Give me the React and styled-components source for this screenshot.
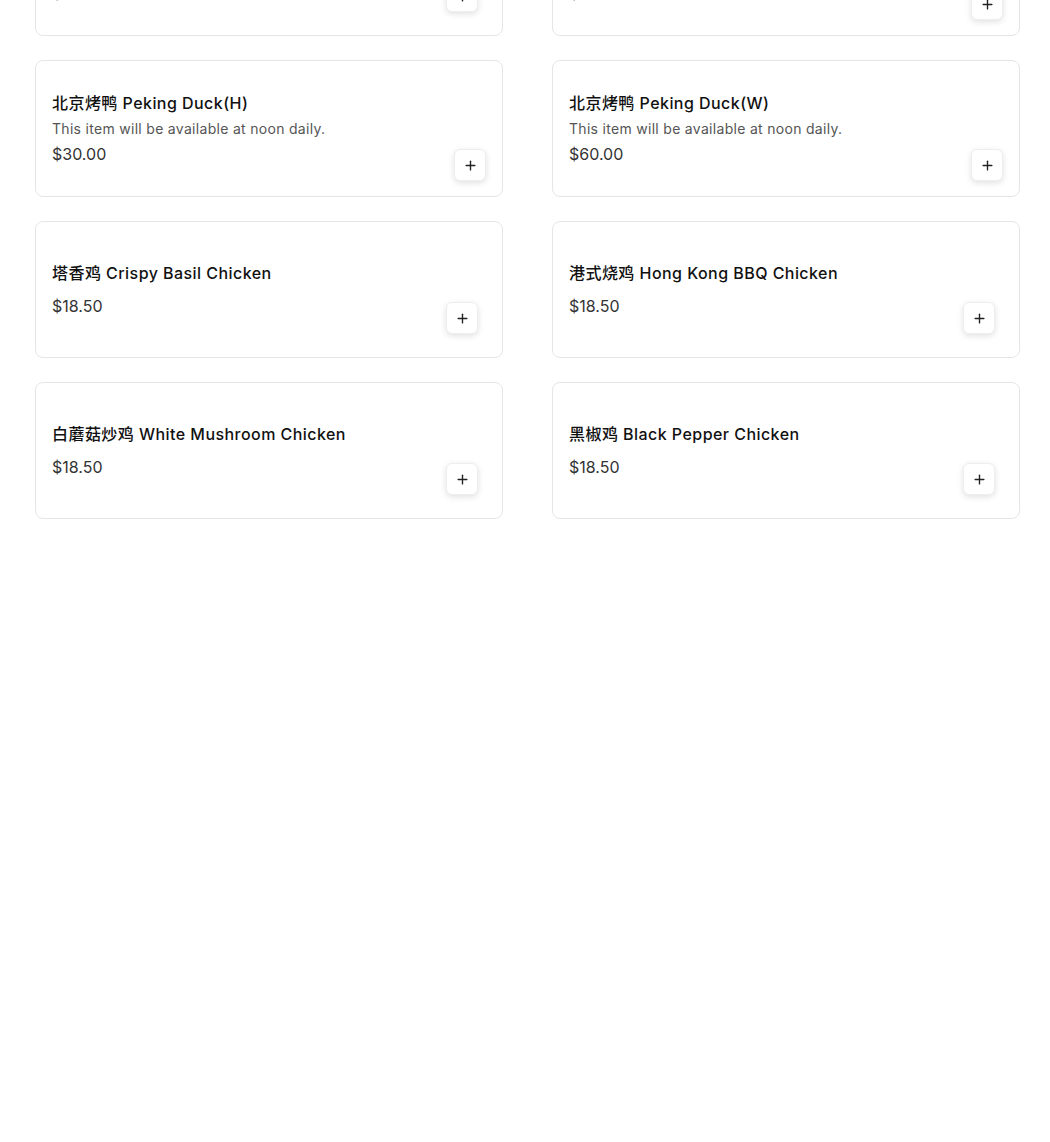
import React from "react";
import styled, { createGlobalStyle } from "styled-components";
import { Plus } from "lucide-react";

const items = [
    { zh: "北京烤鸭", name: "Half Peking Duck", desc: "This item will be available at noon daily.", price: "$30.00", inset: true },
    { zh: "北京烤鸭", name: "Whole Peking Duck", desc: "This item will be available at noon daily.", price: "$60.00" },
    { zh: "北京烤鸭", name: "Peking Duck(H)", desc: "This item will be available at noon daily.", price: "$30.00" },
    { zh: "北京烤鸭", name: "Peking Duck(W)", desc: "This item will be available at noon daily.", price: "$60.00" },
    { zh: "塔香鸡", name: "Crispy Basil Chicken", price: "$18.50", inset: true },
    { zh: "港式烧鸡", name: "Hong Kong BBQ Chicken", price: "$18.50", inset: true },
    { zh: "白蘑菇炒鸡", name: "White Mushroom Chicken", price: "$18.50", inset: true },
    { zh: "黑椒鸡", name: "Black Pepper Chicken", price: "$18.50", inset: true },
];

export default function App() {
    return (
        <>
            <Global />
            <Grid>
                {items.map((item, i) => (
                    <Card key={`item-${i}`}>
                        <Info>
                            <Title $spaced={!item.desc}>
                                {item.zh} {item.name}
                            </Title>
                            {item.desc && <Desc>{item.desc}</Desc>}
                            <Price>{item.price}</Price>
                        </Info>
                        <AddButton $inset={item.inset} aria-label="Add">
                            <Plus size={15} strokeWidth={2.2} />
                        </AddButton>
                    </Card>
                ))}
            </Grid>
        </>
    );
}

const Global = createGlobalStyle`
    body {
        margin: 0;
        background: #fff;
        font-family: Inter, "Noto Sans CJK SC", sans-serif;
        color: #1a1a1a;
    }
`;
const Grid = styled.div`
    display: grid;
    grid-template-columns: 1fr 1fr;
    column-gap: 49px;
    row-gap: 24px;
    padding: 0 30px 0 35px;
    margin-top: -101px;
`;
const Card = styled.div`
    display: flex;
    align-items: center;
    min-height: 137px;
    box-sizing: border-box;
    padding: 16px;
    border: 1px solid #e6e6e6;
    border-radius: 8px;
    background: #fff;
`;
const Info = styled.div`
    flex: 1;
    display: flex;
    flex-direction: column;
`;
const Title = styled.div`
    font-size: 16px;
    font-weight: 500;
    line-height: 20px;
    letter-spacing: 0.45px;
    color: #111;
    margin-bottom: ${(p) => (p.$spaced ? "13px" : "6px")};
`;
const Desc = styled.div`
    font-size: 14px;
    line-height: 20px;
    letter-spacing: 0.3px;
    color: #555;
    margin-bottom: 5px;
`;
const Price = styled.div`
    font-size: 16px;
    line-height: 20px;
    color: #333;
`;
const AddButton = styled.button`
    align-self: flex-end;
    flex: none;
    display: flex;
    align-items: center;
    justify-content: center;
    width: 32px;
    height: 32px;
    padding: 0;
    margin: ${(p) => (p.$inset ? "0 8px 7px 0" : "0 0 -1px 0")};
    border: 1px solid #eee;
    border-radius: 6px;
    background: #fff;
    color: #222;
    box-shadow: 0 2px 6px rgba(0, 0, 0, 0.12);
`;
